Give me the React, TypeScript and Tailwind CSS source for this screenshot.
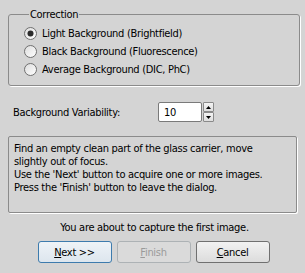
import type { ReactNode } from 'react'

// Background correction wizard page, classic Windows dialog look.

const OPTIONS = [
  'Light Background (Brightfield)',
  'Black Background (Fluorescence)',
  'Average Background (DIC, PhC)',
]

export default function App() {
  return (
    <div className="w-[305px] h-[273px] bg-[#d4d4d4] text-black text-[11px] leading-[13px] tracking-[-0.3px] font-['DejaVu_Sans_Condensed','DejaVu_Sans',sans-serif] font-stretch-condensed pt-[8px] overflow-hidden">
      <fieldset className="mx-[8px] w-[292px] border border-[#8b8b8b] rounded-[3px] shadow-[1px_1px_0_#ffffff] pl-[15px] pt-[3px] pb-[7px]">
        <legend className="ml-[5px] px-[1px]">Correction</legend>
        {OPTIONS.map((label, i) => (
          <div key={label} className="flex items-center h-[18px] gap-[5px]">
            <Radio checked={i === 0} />
            <span>{label}</span>
          </div>
        ))}
      </fieldset>

      <div className="flex items-center mt-[16px] h-[20px] pl-[13px]">
        <span className="w-[145px]">Background Variability:</span>
        <div className="flex h-[20px]">
          <div className="w-[44px] h-[20px] bg-white border border-[#7a7a7a] rounded-[2px] flex items-center pl-[5px]">
            10
          </div>
          <div className="flex flex-col ml-[1px] w-[11px]">
            <SpinButton up />
            <SpinButton />
          </div>
        </div>
      </div>

      <div className="mx-[8px] mt-[14px] h-[77px] border border-[#8b8b8b] rounded-[2px] shadow-[1px_1px_0_#ffffff] pl-[5px] pt-[5px]">
        <p>Find an empty clean part of the glass carrier, move</p>
        <p>slightly out of focus.</p>
        <p>Use the 'Next' button to acquire one or more images.</p>
        <p>Press the 'Finish' button to leave the dialog.</p>
      </div>

      <p className="text-center mt-[8px] pl-[4px]">You are about to capture the first image.</p>

      <div className="flex justify-center gap-[5px] mt-[7px] pl-[2px]">
        <Button variant="default">
          <u>N</u>ext &gt;&gt;
        </Button>
        <Button variant="disabled">
          <u>F</u>inish
        </Button>
        <Button variant="normal">
          <u>C</u>ancel
        </Button>
      </div>
    </div>
  )
}

function Radio({ checked }: { checked?: boolean }) {
  return (
    <svg width="13" height="13" viewBox="0 0 13 13" className="shrink-0">
      <defs>
        <linearGradient id="rg" x1="0" y1="0" x2="1" y2="1">
          <stop offset="0" stopColor="#dcdcdc" />
          <stop offset="1" stopColor="#ffffff" />
        </linearGradient>
      </defs>
      <circle cx="6.5" cy="6.5" r="6" fill="url(#rg)" stroke="#6f6f6f" />
      {checked && <circle cx="6.5" cy="6.5" r="3" fill="#2a2a2a" />}
    </svg>
  )
}

function SpinButton({ up }: { up?: boolean }) {
  return (
    <div className="h-[10px] bg-gradient-to-b from-[#f4f4f4] to-[#dedede] border border-[#8a8a8a] rounded-[1px] flex items-center justify-center">
      <svg width="5" height="3" viewBox="0 0 5 3">
        <path d={up ? 'M0 3 L2.5 0 L5 3 Z' : 'M0 0 L2.5 3 L5 0 Z'} fill="#000" />
      </svg>
    </div>
  )
}

function Button({
  variant,
  children,
}: {
  variant: 'default' | 'normal' | 'disabled'
  children: ReactNode
}) {
  const styles = {
    default: 'border-[#3d7bad] bg-gradient-to-b from-[#eef3f7] to-[#dde6ee] text-black',
    normal: 'border-[#707070] bg-gradient-to-b from-[#f2f2f2] to-[#dcdcdc] text-black',
    disabled: 'border-[#adb2b5] bg-[#dadada] text-[#9a9a9a]',
  }[variant]
  return (
    <button
      className={`w-[74px] h-[22px] border rounded-[3px] flex items-center justify-center ${styles}`}
    >
      <span>{children}</span>
    </button>
  )
}
